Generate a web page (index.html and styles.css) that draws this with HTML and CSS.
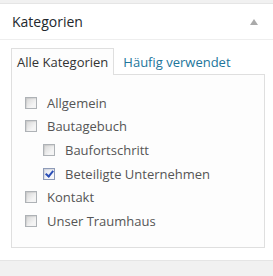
FILE: index.html
```html
<!DOCTYPE html>
<html lang="de">
<head>
    <meta charset="UTF-8">
    <title>Kategorien</title>
    <link rel="stylesheet" href="styles.css">
</head>
<body>
    <div class="postbox">
        <div class="hndle">
            <span class="title">Kategorien</span>
            <span class="toggle"></span>
        </div>
        <div class="inside">
            <ul class="tabs">
                <li class="tab active">Alle Kategorien</li>
                <li class="tab"><a href="#">Häufig verwendet</a></li>
            </ul>
            <div class="panel">
                <ul class="checklist">
                    <li><label><span class="cb"></span>Allgemein</label></li>
                    <li><label><span class="cb"></span>Bautagebuch</label>
                        <ul class="children">
                            <li><label><span class="cb"></span>Baufortschritt</label></li>
                            <li><label><span class="cb checked"></span>Beteiligte Unternehmen</label></li>
                        </ul>
                    </li>
                    <li><label><span class="cb"></span>Kontakt</label></li>
                    <li><label><span class="cb"></span>Unser Traumhaus</label></li>
                </ul>
            </div>
        </div>
    </div>
</body>
</html>
```

FILE: styles.css
```css
body {
    margin: 0;
    background: #f1f1f1;
    font-family: "Open Sans", sans-serif;
    font-size: 13px;
    color: #444;
}

.postbox {
    margin-top: 3px;
    background: #fff;
    border-top: 1px solid #e5e5e5;
    border-bottom: 1px solid #e5e5e5;
}

.hndle {
    height: 35px;
    padding: 0 12px;
    display: flex;
    align-items: center;
    justify-content: space-between;
    border-bottom: 1px solid #eee;
}

.title {
    font-size: 14px;
    color: #23282d;
}

.toggle {
    width: 0;
    height: 0;
    margin-right: 3px;
    border-left: 4px solid transparent;
    border-right: 4px solid transparent;
    border-bottom: 6px solid #aaa;
}

.inside {
    padding: 8px 8px 12px 11px;
}

.tabs {
    list-style: none;
    margin: 0;
    padding: 0;
    display: flex;
}

.tab {
    height: 26px;
    line-height: 26px;
    padding: 0 5px;
    border: 1px solid transparent;
    border-bottom: 0;
    margin-bottom: -1px;
    position: relative;
}

.tab.active {
    border-color: #dfdfdf;
    background: #fdfdfd;
    color: #333;
}

.tab a {
    color: #21759b;
    text-decoration: none;
    padding-left: 3px;
}

.panel {
    border: 1px solid #dfdfdf;
    background: #fdfdfd;
    padding: 16px 0 14px 13px;
}

.checklist,
.children {
    list-style: none;
    margin: 0;
    padding: 0;
}

.children {
    padding-left: 18px;
}

.checklist label {
    display: flex;
    align-items: center;
    height: 23.6px;
    color: #555;
}

.cb {
    width: 10px;
    height: 10px;
    margin-right: 10px;
    border: 1px solid #aeb2b6;
    background: linear-gradient(135deg, #d6d6d6, #f4f4f4 70%);
    box-shadow: inset 1px 1px 1px rgba(0, 0, 0, 0.08);
    position: relative;
}

.cb.checked {
    border-color: #8e9bb8;
    background: linear-gradient(135deg, #dfe3ee, #f8f8fb 70%);
}

.cb.checked::after {
    content: "";
    position: absolute;
    left: 3px;
    top: 0px;
    width: 3px;
    height: 6px;
    border-right: 2px solid #2b4fb8;
    border-bottom: 2px solid #2b4fb8;
    transform: rotate(40deg);
}
```
